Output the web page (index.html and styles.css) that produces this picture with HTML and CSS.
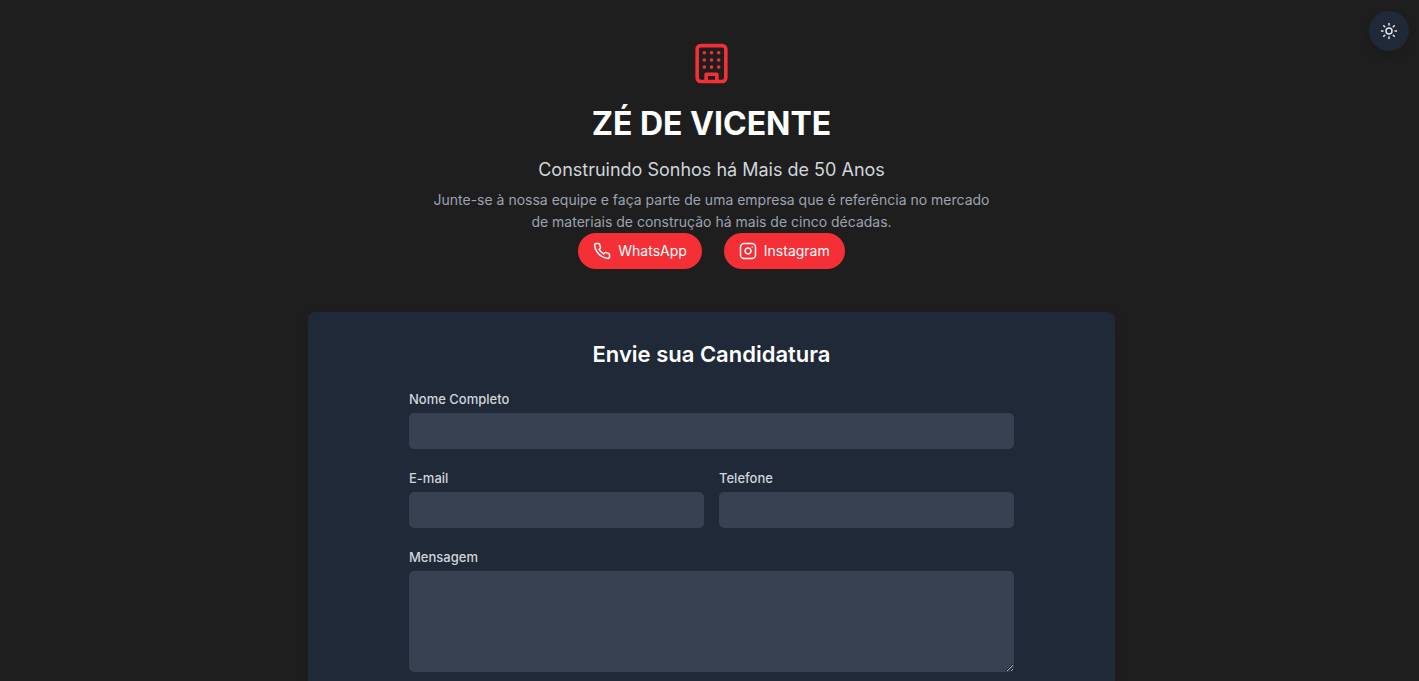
FILE: index.html
```html
<!DOCTYPE html>
<html lang="pt-BR">
<head>
<meta charset="utf-8">
<meta name="viewport" content="width=device-width, initial-scale=1">
<title>Zé de Vicente</title>
<link rel="stylesheet" href="styles.css">
</head>
<body>
<button class="theme-toggle" type="button" aria-label="Alternar tema">
  <svg class="icon icon-sm" viewBox="0 0 24 24"><circle cx="12" cy="12" r="4"/><path d="M12 2v2M12 20v2M4.93 4.93l1.41 1.41M17.66 17.66l1.41 1.41M2 12h2M20 12h2M6.34 17.66l-1.41 1.41M19.07 4.93l-1.41 1.41"/></svg>
</button>
<main class="page">
  <header class="hero">
    <svg class="icon logo" viewBox="0 0 24 24"><rect x="4" y="2" width="16" height="20" rx="2"/><path d="M9 22v-4h6v4M8 6h.01M16 6h.01M12 6h.01M12 10h.01M12 14h.01M16 10h.01M16 14h.01M8 10h.01M8 14h.01"/></svg>
    <h1 class="title">ZÉ DE VICENTE</h1>
    <p class="tagline">Construindo Sonhos há Mais de 50 Anos</p>
    <p class="intro">Junte-se à nossa equipe e faça parte de uma empresa que é referência no mercado de materiais de construção há mais de cinco décadas.</p>
    <nav class="links">
      <a class="pill" href="#whatsapp">
        <svg class="icon icon-sm" viewBox="0 0 24 24"><path d="M22 16.92v3a2 2 0 0 1-2.18 2 19.79 19.79 0 0 1-8.63-3.07 19.5 19.5 0 0 1-6-6 19.79 19.79 0 0 1-3.07-8.67A2 2 0 0 1 4.11 2h3a2 2 0 0 1 2 1.72 12.84 12.84 0 0 0 .7 2.81 2 2 0 0 1-.45 2.11L8.09 9.91a16 16 0 0 0 6 6l1.27-1.27a2 2 0 0 1 2.11-.45 12.84 12.84 0 0 0 2.81.7A2 2 0 0 1 22 16.92z"/></svg>
        WhatsApp
      </a>
      <a class="pill" href="#instagram">
        <svg class="icon icon-sm" viewBox="0 0 24 24"><rect x="2" y="2" width="20" height="20" rx="5"/><path d="M16 11.37A4 4 0 1 1 12.63 8 4 4 0 0 1 16 11.37zM17.5 6.5h.01"/></svg>
        Instagram
      </a>
    </nav>
  </header>
  <section class="card">
    <h2 class="card-title">Envie sua Candidatura</h2>
    <form class="form">
      <div class="field">
        <label class="label" for="nome">Nome Completo</label>
        <input class="control" id="nome" type="text">
      </div>
      <div class="row">
        <div class="field">
          <label class="label" for="email">E-mail</label>
          <input class="control" id="email" type="email">
        </div>
        <div class="field">
          <label class="label" for="telefone">Telefone</label>
          <input class="control" id="telefone" type="tel">
        </div>
      </div>
      <div class="field">
        <label class="label" for="mensagem">Mensagem</label>
        <textarea class="control message" id="mensagem"></textarea>
      </div>
    </form>
  </section>
</main>
</body>
</html>
```
FILE: styles.css
```css
* {
  box-sizing: border-box;
}

body {
  margin: 0;
  background: #1e1e1e;
  color: #fff;
  font-family: Inter, "Liberation Sans", sans-serif;
}

h1, h2, p {
  margin: 0;
}

.icon {
  flex: none;
  fill: none;
  stroke: currentColor;
  stroke-width: 2;
  stroke-linecap: round;
  stroke-linejoin: round;
}

.icon-sm {
  width: 18px;
  height: 18px;
}

.theme-toggle {
  position: fixed;
  top: 11px;
  right: 10px;
  display: flex;
  align-items: center;
  justify-content: center;
  width: 40px;
  height: 40px;
  padding: 0;
  border: 0;
  border-radius: 50%;
  background: #1f2937;
  color: #e5e7eb;
  box-shadow: 0 4px 8px rgb(0 0 0 / 12%);
}

.page {
  display: flex;
  flex-direction: column;
  align-items: center;
  min-height: 100vh;
  padding: 42px 12px 0 16px;
}

.hero {
  display: flex;
  flex-direction: column;
  align-items: center;
  margin-bottom: 43px;
  text-align: center;
}

.logo {
  width: 43px;
  height: 43px;
  margin-bottom: 21px;
  color: #f42f36;
}

.title {
  margin-bottom: 15px;
  font-size: 32px;
  line-height: 36px;
  font-weight: 700;
}

.tagline {
  margin-bottom: 7px;
  color: #d1d5db;
  font-size: 18px;
  line-height: 25px;
}

.intro {
  max-width: 572px;
  color: #9ca3af;
  font-size: 14px;
  line-height: 22px;
}

.links {
  display: flex;
  gap: 22px;
}

.pill {
  display: flex;
  align-items: center;
  gap: 7px;
  padding: 7px 15px;
  border-radius: 18px;
  background: #f42f36;
  color: #fff;
  font-size: 14px;
  line-height: 22px;
  text-decoration: none;
}

.card {
  flex: 1;
  width: 100%;
  max-width: 807px;
  padding: 28px 29px 9px;
  border-radius: 7px 7px 0 0;
  background: #1f2937;
  box-shadow: 0 9px 14px rgb(0 0 0 / 12%);
}

.card-title {
  margin-bottom: 22px;
  font-size: 22px;
  line-height: 28px;
  font-weight: 600;
  text-align: center;
}

.form {
  display: flex;
  flex-direction: column;
  gap: 20px;
  max-width: 605px;
  margin: 0 auto;
}

.row {
  display: grid;
  grid-template-columns: 1fr 1fr;
  gap: 15px;
}

.field {
  display: flex;
  flex-direction: column;
  gap: 4px;
}

.label {
  color: #d1d5db;
  font-size: 13px;
  line-height: 19px;
  font-weight: 500;
}

.control {
  width: 100%;
  height: 36px;
  margin: 0;
  padding: 7px 11px;
  border: 0;
  border-radius: 5px;
  background: #374151;
  color: #fff;
  font: inherit;
  font-size: 14px;
}

.message {
  height: 101px;
  resize: vertical;
}
```
